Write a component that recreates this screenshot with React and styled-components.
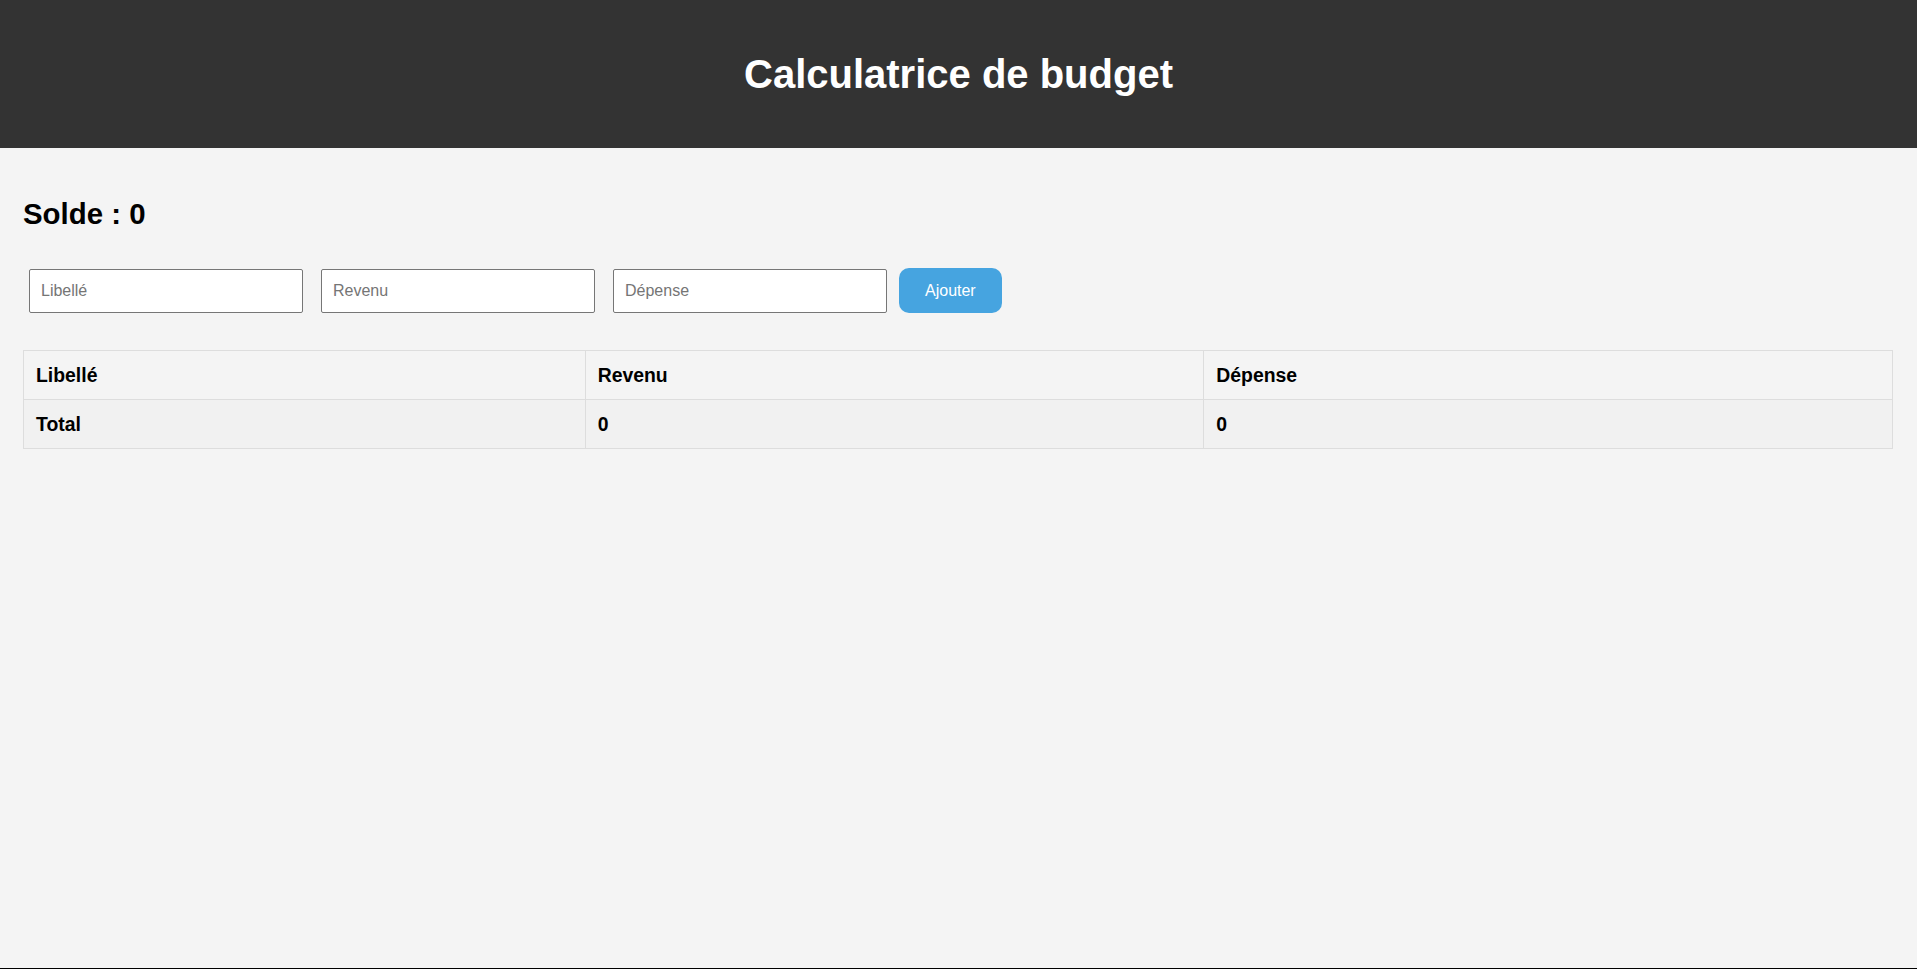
import React, { useState } from 'react';
import styled, { createGlobalStyle } from 'styled-components';

const GlobalStyle = createGlobalStyle`
  html {
    background: #000;
  }

  body {
    margin: 0;
    min-height: calc(100vh - 1px);
    background-color: #f4f4f4;
    font-family: 'Liberation Sans', Arial, sans-serif;
    color: #000;
  }
`;

const Header = styled.header`
  background-color: #333;
  color: #fff;
  text-align: center;
  padding: 24px 0;

  h1 {
    margin: 27px 0;
    font-size: 40px;
    line-height: 46px;
    font-weight: bold;
  }
`;

const Main = styled.main`
  padding: 0 24px 0 23px;
`;

const Balance = styled.h2`
  margin: 49px 0 0;
  font-size: 29.4px;
  font-weight: bold;
`;

const Form = styled.div`
  display: flex;
  align-items: flex-end;
  margin-top: 37px;
  padding-left: 6px;
`;

const Field = styled.input`
  width: 250px;
  padding: 12px 11px;
  border: 1px solid #767676;
  border-radius: 2px;
  background: #fff;
  font-family: 'Liberation Sans', Arial, sans-serif;
  font-size: 16px;
  line-height: 18px;
  outline: none;

  & + & {
    margin-left: 18px;
  }

  &::placeholder {
    color: #757575;
  }
`;

const Button = styled.button`
  height: 45px;
  margin-left: 12px;
  padding: 0 26px;
  border: none;
  border-radius: 10px;
  background-color: #46a4e0;
  color: #fff;
  font-family: 'Liberation Sans', Arial, sans-serif;
  font-size: 16px;
  cursor: pointer;
`;

const Table = styled.table`
  width: 100%;
  margin-top: 37px;
  border-collapse: collapse;
  table-layout: fixed;
`;

const Row = styled.tr`
  background-color: ${({ $shade }) => ($shade ? '#f1f1f1' : 'transparent')};
`;

const Cell = styled.td`
  border: 1px solid #ddd;
  padding: 12px;
  text-align: left;
  font-size: 19.4px;
  line-height: 24px;
  font-weight: bold;
`;

function App() {
  const [items] = useState([]);
  const income = items.reduce((s, i) => s + i.income, 0);
  const expense = items.reduce((s, i) => s + i.expense, 0);

  return (
    <>
      <GlobalStyle />
      <Header>
        <h1>Calculatrice de budget</h1>
      </Header>
      <Main>
        <Balance>Solde : {income - expense}</Balance>
        <Form>
          <Field type="text" placeholder="Libellé" />
          <Field type="number" placeholder="Revenu" />
          <Field type="number" placeholder="Dépense" />
          <Button>Ajouter</Button>
        </Form>
        <Table>
          <colgroup>
            <col style={{ width: '30.05%' }} />
            <col style={{ width: '33.1%' }} />
            <col />
          </colgroup>
          <thead>
            <Row>
              <Cell as="th">Libellé</Cell>
              <Cell as="th">Revenu</Cell>
              <Cell as="th">Dépense</Cell>
            </Row>
          </thead>
          <tbody>
            <Row $shade>
              <Cell>Total</Cell>
              <Cell>{income}</Cell>
              <Cell>{expense}</Cell>
            </Row>
          </tbody>
        </Table>
      </Main>
    </>
  );
}

export default App;
